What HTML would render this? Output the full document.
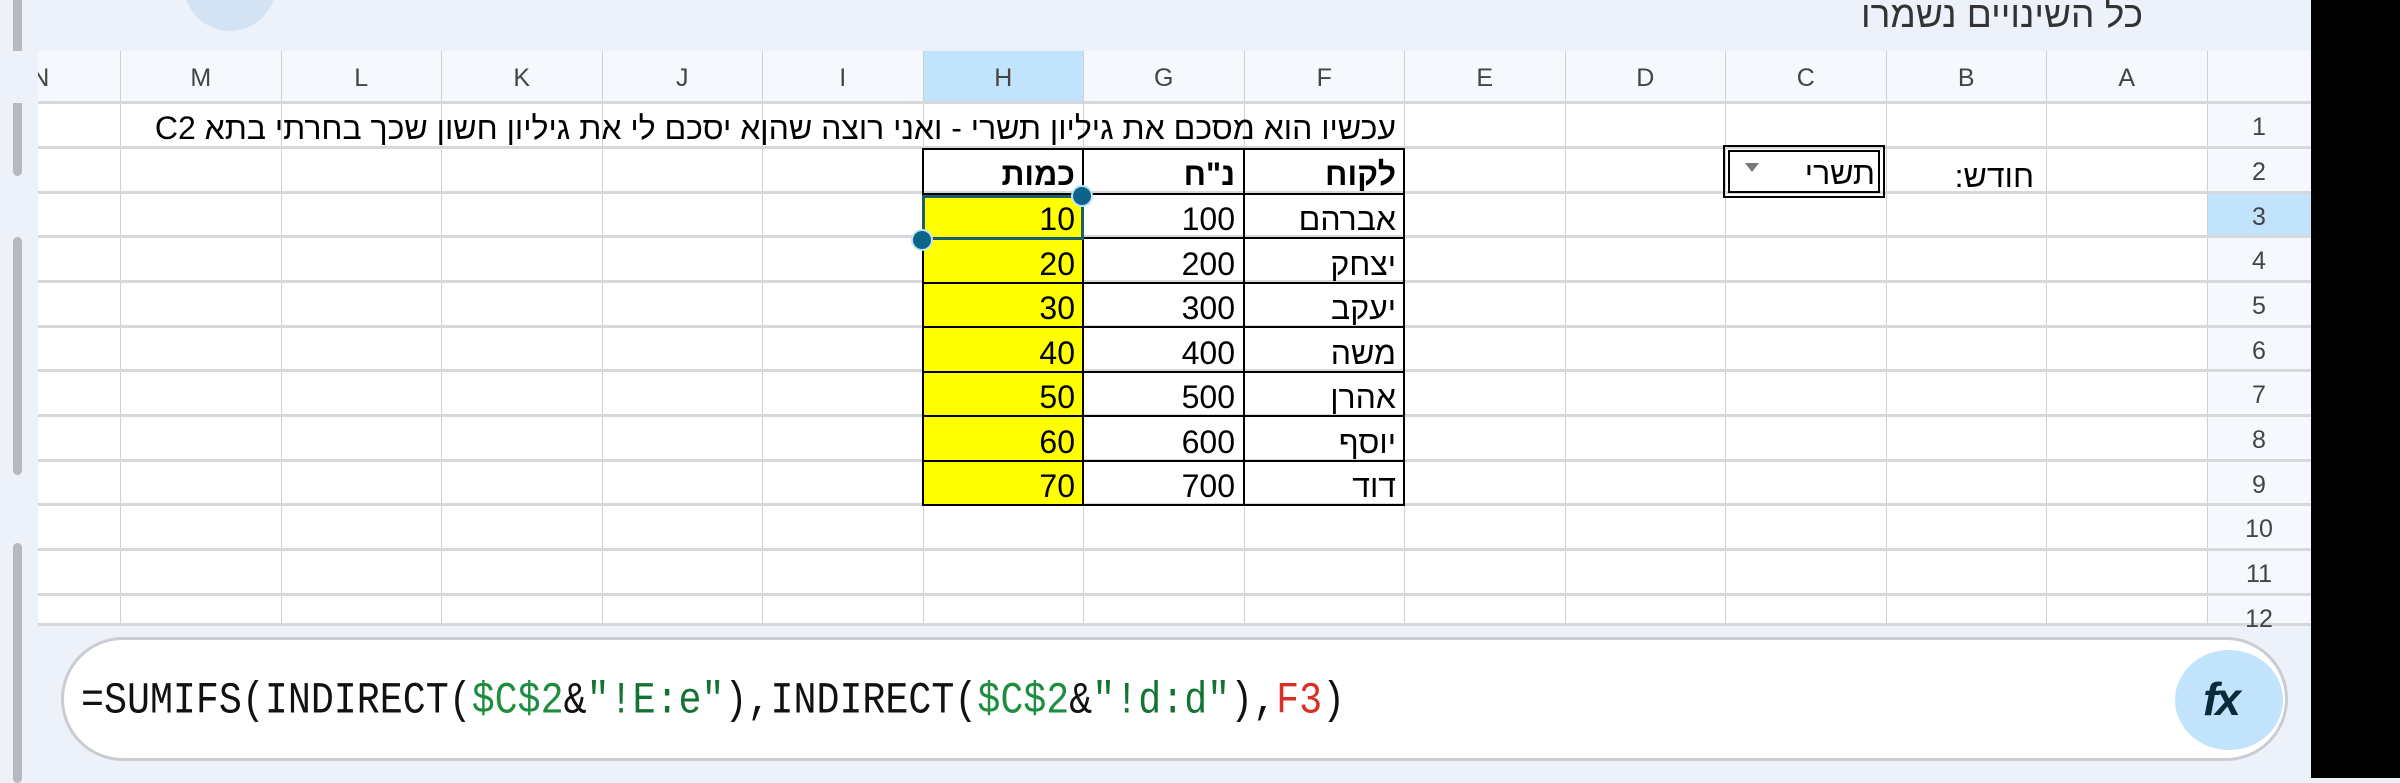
<!DOCTYPE html>
<html><head><meta charset="utf-8">
<style>
*{margin:0;padding:0;box-sizing:border-box}
body{width:2400px;height:778px;overflow:hidden;background:#edf2fa;position:relative;font-family:"Liberation Sans","Noto Sans CJK JP",sans-serif}
.a{position:absolute}
.vl{position:absolute;top:51px;width:1px;height:574px;background:#cfd1d4}
.hl{position:absolute;left:38px;width:2273px;height:3px;background:#d6d8db}
.ch{position:absolute;top:51px;height:52px;width:160.5px;text-align:center;line-height:54px;font-size:25px;color:#444}
.rh{position:absolute;left:2207px;width:104px;text-align:center;font-size:25px;color:#444;height:44.7px;line-height:48px}
.c{position:absolute;height:44.7px;line-height:52px;font-size:32px;color:#000;text-align:right;padding-right:8px;white-space:nowrap;direction:rtl}
</style></head><body>
<div class="a" style="left:184px;top:-61px;width:92px;height:92px;border-radius:50%;background:#d3e3f3"></div>
<div class="a" style="right:257px;top:-6px;font-size:37px;color:#333;direction:rtl">כל השינויים נשמרו</div>
<div class="a" style="left:13px;top:0;width:9px;height:176px;background:#b6b9be;border-radius:0 0 5px 5px"></div>
<div class="a" style="left:13px;top:237px;width:9px;height:238px;background:#b6b9be;border-radius:5px"></div>
<div class="a" style="left:13px;top:543px;width:9px;height:240px;background:#b6b9be;border-radius:5px"></div>
<div class="a" style="left:38px;top:51px;width:2273px;height:52px;background:#f5f8fc"></div>
<div class="a" style="left:38px;top:103px;width:2169px;height:522px;background:#fff"></div>
<div class="a" style="left:2207px;top:103px;width:104px;height:522px;background:#f5f8fc"></div>
<div class="a" style="left:923px;top:51px;width:160px;height:52px;background:#c2e3fc"></div>
<div class="a" style="left:2207px;top:193px;width:104px;height:45px;background:#c2e3fc"></div>
<div class="vl" style="left:120px"></div><div class="vl" style="left:281px"></div><div class="vl" style="left:441px"></div><div class="vl" style="left:602px"></div><div class="vl" style="left:762px"></div><div class="vl" style="left:923px"></div><div class="vl" style="left:1083px"></div><div class="vl" style="left:1244px"></div><div class="vl" style="left:1404px"></div><div class="vl" style="left:1565px"></div><div class="vl" style="left:1725px"></div><div class="vl" style="left:1886px"></div><div class="vl" style="left:2046px"></div><div class="vl" style="left:2207px"></div>
<div class="hl" style="top:101px"></div><div class="hl" style="top:146px"></div><div class="hl" style="top:191px"></div><div class="hl" style="top:235px"></div><div class="hl" style="top:280px"></div><div class="hl" style="top:325px"></div><div class="hl" style="top:369px"></div><div class="hl" style="top:414px"></div><div class="hl" style="top:459px"></div><div class="hl" style="top:503px"></div><div class="hl" style="top:548px"></div><div class="hl" style="top:593px"></div><div class="hl" style="top:623px"></div>
<div class="ch" style="left:-40px">N</div><div class="ch" style="left:120.5px">M</div><div class="ch" style="left:281px">L</div><div class="ch" style="left:441.5px">K</div><div class="ch" style="left:602px">J</div><div class="ch" style="left:762.5px">I</div><div class="ch" style="left:923px">H</div><div class="ch" style="left:1083.5px">G</div><div class="ch" style="left:1244px">F</div><div class="ch" style="left:1404.5px">E</div><div class="ch" style="left:1565px">D</div><div class="ch" style="left:1725.5px">C</div><div class="ch" style="left:1886px">B</div><div class="ch" style="left:2046.5px">A</div>
<div class="a" style="left:0;top:51px;width:38px;height:52px;background:#edf2fa"></div>
<div class="rh" style="top:103px">1</div><div class="rh" style="top:148px">2</div><div class="rh" style="top:192.5px">3</div><div class="rh" style="top:237px">4</div><div class="rh" style="top:282px">5</div><div class="rh" style="top:326.5px">6</div><div class="rh" style="top:371px">7</div><div class="rh" style="top:416px">8</div><div class="rh" style="top:460.5px">9</div><div class="rh" style="top:505px">10</div><div class="rh" style="top:550px">11</div><div class="rh" style="top:595px">12</div>
<div class="a" style="left:923px;top:193px;width:160px;height:312px;background:#ffff00"></div>
<div class="c" style="right:996px;top:102px;font-size:32px">עכשיו הוא מסכם את גיליון תשרי - ואני רוצה שהןא יסכם לי את גיליון חשון שכך בחרתי בתא C2</div>
<div class="a" style="left:922px;top:148px;width:483px;height:358px;border:2px solid #000"></div>
<div class="a" style="left:1082px;top:148px;width:2px;height:358px;background:#000"></div>
<div class="a" style="left:1243px;top:148px;width:2px;height:358px;background:#000"></div>
<div class="a" style="left:922px;top:193px;width:483px;height:2px;background:#000"></div>
<div class="a" style="left:922px;top:237px;width:483px;height:2px;background:#000"></div>
<div class="a" style="left:922px;top:282px;width:483px;height:2px;background:#000"></div>
<div class="a" style="left:922px;top:326px;width:483px;height:2px;background:#000"></div>
<div class="a" style="left:922px;top:371px;width:483px;height:2px;background:#000"></div>
<div class="a" style="left:922px;top:415px;width:483px;height:2px;background:#000"></div>
<div class="a" style="left:922px;top:460px;width:483px;height:2px;background:#000"></div>
<div class="c" style="left:1244px;width:160px;top:148px;font-weight:bold">לקוח</div>
<div class="c" style="left:1083px;width:160px;top:148px;font-weight:bold">נ"ח</div>
<div class="c" style="left:923px;width:160px;top:148px;font-weight:bold">כמות</div>
<div class="c" style="left:1244px;width:160px;top:193px">אברהם</div><div class="c" style="left:1083px;width:160px;top:193px">100</div><div class="c" style="left:923px;width:160px;top:193px">10</div>
<div class="c" style="left:1244px;width:160px;top:237.5px">יצחק</div><div class="c" style="left:1083px;width:160px;top:237.5px">200</div><div class="c" style="left:923px;width:160px;top:237.5px">20</div>
<div class="c" style="left:1244px;width:160px;top:282px">יעקב</div><div class="c" style="left:1083px;width:160px;top:282px">300</div><div class="c" style="left:923px;width:160px;top:282px">30</div>
<div class="c" style="left:1244px;width:160px;top:326.5px">משה</div><div class="c" style="left:1083px;width:160px;top:326.5px">400</div><div class="c" style="left:923px;width:160px;top:326.5px">40</div>
<div class="c" style="left:1244px;width:160px;top:371px">אהרן</div><div class="c" style="left:1083px;width:160px;top:371px">500</div><div class="c" style="left:923px;width:160px;top:371px">50</div>
<div class="c" style="left:1244px;width:160px;top:415.5px">יוסף</div><div class="c" style="left:1083px;width:160px;top:415.5px">600</div><div class="c" style="left:923px;width:160px;top:415.5px">60</div>
<div class="c" style="left:1244px;width:160px;top:460px">דוד</div><div class="c" style="left:1083px;width:160px;top:460px">700</div><div class="c" style="left:923px;width:160px;top:460px">70</div>
<div class="a" style="left:922px;top:195px;width:162px;height:45px;border:3px solid #1b5e6e"></div>
<div class="a" style="left:1071px;top:185px;width:22px;height:22px;border-radius:50%;background:#0e6488;border:2px solid #bfe3f7"></div>
<div class="a" style="left:911px;top:229px;width:22px;height:22px;border-radius:50%;background:#0e6488;border:2px solid #bfe3f7"></div>
<div class="a" style="left:1723px;top:145px;width:162px;height:53px;border:2px solid #000"></div>
<div class="a" style="left:1728px;top:150px;width:152px;height:43px;border:2px solid #000"></div>
<div class="a" style="left:1745px;top:163px;width:0;height:0;border-left:7px solid transparent;border-right:7px solid transparent;border-top:9px solid #777"></div>
<div class="c" style="left:1725px;width:158px;top:147px">תשרי</div>
<div class="c" style="left:1886px;width:160px;top:150px;padding-right:12px">חודש:</div>
<div class="a" style="left:61px;top:637px;width:2227px;height:124px;border-radius:62px;background:#fff;border:3px solid #c9ccd0"></div>
<div class="a" style="left:81px;top:676px;font-family:'Liberation Mono',monospace;font-size:38.3px;line-height:50px;color:#111;white-space:nowrap;transform:scaleY(1.15);transform-origin:left center">=SUMIFS(INDIRECT(<span style="color:#1e8e3e">$C$2</span>&amp;<span style="color:#137333">"!E:e"</span>),INDIRECT(<span style="color:#1e8e3e">$C$2</span>&amp;<span style="color:#137333">"!d:d"</span>),<span style="color:#d93025">F3</span>)</div>
<div class="a" style="left:2175px;top:650px;width:108px;height:100px;border-radius:50%;background:#c2e3fc"></div>
<div class="a" style="left:2203px;top:672px;font-family:'Liberation Sans',sans-serif;font-style:italic;font-weight:bold;font-size:46px;color:#0b2b3a;letter-spacing:-3px">fx</div>
<div class="a" style="left:2311px;top:0;width:89px;height:778px;background:#000"></div>
</body></html>
